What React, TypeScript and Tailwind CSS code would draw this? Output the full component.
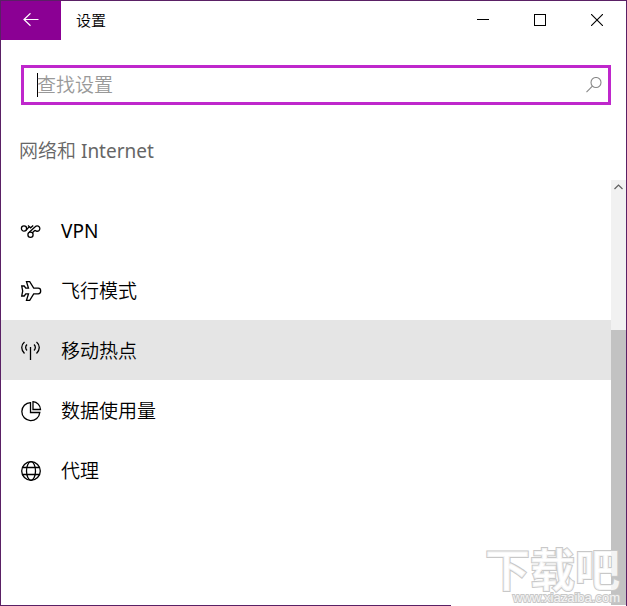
import { type ReactNode } from 'react';

interface SettingItem {
  id: string;
  label: string;
  icon: ReactNode;
}

const items: SettingItem[] = [
  {
    id: 'vpn',
    label: 'VPN',
    icon: (
      <>
        <circle cx="3" cy="7.5" r="2.6" />
        <path d="M14 9.200A2.700 2.700 0 1 0 14.200 5.700L8.200 11.200" />
        <circle cx="9.500" cy="13.800" r="2.600" />
        <path d="M5.200 9 8.400 5.600M7 4.400 9.600 6.800 12.200 4.400M14 9.200 11.400 11.800" />
      </>
    ),
  },
  {
    id: 'airplane',
    label: '飞行模式',
    icon: (
      <path d="M7.500 7.200 5.500.7h3.200L12.700 7.200h4.500c1.500 0 2.500 1.200 2.500 2.800s-1 2.800-2.500 2.800h-4.500L8.700 19.300H5.500l2-6.500H4.800L3.200 15H.7L1.700 10 .7 5h2.500l1.600 2.200z" />
    ),
  },
  {
    id: 'hotspot',
    label: '移动热点',
    icon: (
      <>
        <path d="M9.500 6v13" />
        <path d="M6 3.500c-1.800 1.700-1.800 4.300 0 6M3.500 1C-.2 4-.2 9 3.500 12.500M13 3.500c1.800 1.700 1.800 4.300 0 6M15.500 1c3.700 3 3.700 8 0 11.500" />
      </>
    ),
  },
  {
    id: 'data',
    label: '数据使用量',
    icon: (
      <>
        <path d="M9.500 1.600a9 9 0 1 0 9.300 9.900H9.500z" />
        <path d="M12 .7v7.800h7.500A8 8 0 0 0 12 .7z" />
      </>
    ),
  },
  {
    id: 'proxy',
    label: '代理',
    icon: (
      <>
        <circle cx="10" cy="10" r="9.300" />
        <ellipse cx="10" cy="10" rx="4.500" ry="9.300" />
        <path d="M1.500 6.500h17M1.500 13.500h17" />
      </>
    ),
  },
];

const activeId = 'hotspot';

function TitleBar() {
  return (
    <header className="flex h-[39px] items-stretch">
      <button aria-label="返回" className="flex w-[60px] items-center justify-center bg-[#8b0094] pb-px text-white">
        <svg width="16" height="14" viewBox="0 0 16 14" fill="none" stroke="currentColor" strokeWidth="1.2">
          <path d="M15.500 6.500H1M7.500.3 1 6.500l6.500 6.200" />
        </svg>
      </button>
      <h1 className="flex flex-1 items-center pl-[15px] text-[15px]">设置</h1>
      <div className="flex pr-px pb-px">
        <button aria-label="最小化" className="flex w-[57px] items-center justify-center">
          <svg width="12" height="12" viewBox="0 0 12 12" stroke="black" shapeRendering="crispEdges">
            <path d="M0 5.500h12" />
          </svg>
        </button>
        <button aria-label="最大化" className="flex w-[57px] items-center justify-center">
          <svg width="12" height="12" viewBox="0 0 12 12" fill="none" stroke="black" shapeRendering="crispEdges">
            <rect x=".5" y=".5" width="11" height="11" />
          </svg>
        </button>
        <button aria-label="关闭" className="flex w-[57px] items-center justify-center">
          <svg width="12" height="12" viewBox="0 0 12 12" fill="none" stroke="black" strokeWidth="1.1">
            <path d="m0 0 12 12M12 0 0 12" />
          </svg>
        </button>
      </div>
    </header>
  );
}

function SearchBox() {
  return (
    <div className="mt-[25px] mr-[15px] ml-5 flex h-10 items-center border-[3px] border-[#bf27cc] pr-[6px] pb-px pl-[13px]">
      {/* text caret */}
      <span className="-mr-px h-6 w-px bg-black" />
      <input
        type="text"
        aria-label="查找设置"
        placeholder="查找设置"
        className="min-w-0 flex-1 text-[19px] leading-6 outline-none placeholder:text-[#999999]"
      />
      <button aria-label="搜索">
        <svg width="16" height="16" viewBox="0 0 16 16" fill="none" stroke="#888888" strokeWidth="1.100">
          <circle cx="10" cy="5.500" r="5" />
          <path d="M6.400 9.200.5 15.200" />
        </svg>
      </button>
    </div>
  );
}

function Scrollbar() {
  return (
    <div className="flex w-[15px] flex-col bg-[#f1f1f1]">
      <button aria-label="向上滚动" className="flex h-[14px] items-center justify-center">
        <svg width="9" height="6" viewBox="0 0 9 6" fill="none" stroke="#606060" strokeWidth="1.200">
          <path d="M.5 5 4.500 1l4 4" />
        </svg>
      </button>
      <div className="mt-[136px] flex-1 bg-[#c2c2c2]" />
    </div>
  );
}

function Watermark() {
  return (
    <div
      aria-hidden="true"
      className="pointer-events-none absolute right-[6px] bottom-0 flex flex-col items-end text-white/80 [paint-order:stroke_fill]"
    >
      <span className="font-['Noto_Sans_CJK_SC',sans-serif] text-[45px] leading-[44px] font-bold [-webkit-text-stroke:2px_#c8c8c8]">
        下载吧
      </span>
      <span className="font-['Liberation_Sans',sans-serif] text-[13px] leading-4 [-webkit-text-stroke:2px_#c8c8c8]">
        www.xiazaiba.com
      </span>
    </div>
  );
}

export default function App() {
  return (
    <div className="relative flex min-h-screen flex-col border border-b-0 border-[#5a2065] bg-white font-['Noto_Sans','Noto_Sans_CJK_SC_DemiLight','Noto_Sans_CJK_SC',sans-serif] text-black">
      <TitleBar />
      <SearchBox />
      <h2 className="mt-8 ml-[18px] text-[19px] leading-7 text-[#666666]">网络和 Internet</h2>

      <div className="mt-[15px] flex flex-1">
        <nav className="flex-1 pt-5">
          {items.map((item) => (
            <a
              key={item.id}
              href={`#${item.id}`}
              className={`flex h-[60px] items-center gap-5 pt-0.5 pl-5 text-[19px] ${item.id === activeId ? 'bg-[#e5e5e5]' : ''}`}
            >
              <svg width="20" height="20" viewBox="0 0 20 20" fill="none" stroke="black" strokeWidth="1.300" className="overflow-visible">
                {item.icon}
              </svg>
              {item.label}
            </a>
          ))}
        </nav>
        <Scrollbar />
      </div>

      <div className="h-px w-[72%] bg-[#5a2065]" />
      <Watermark />
    </div>
  );
}
